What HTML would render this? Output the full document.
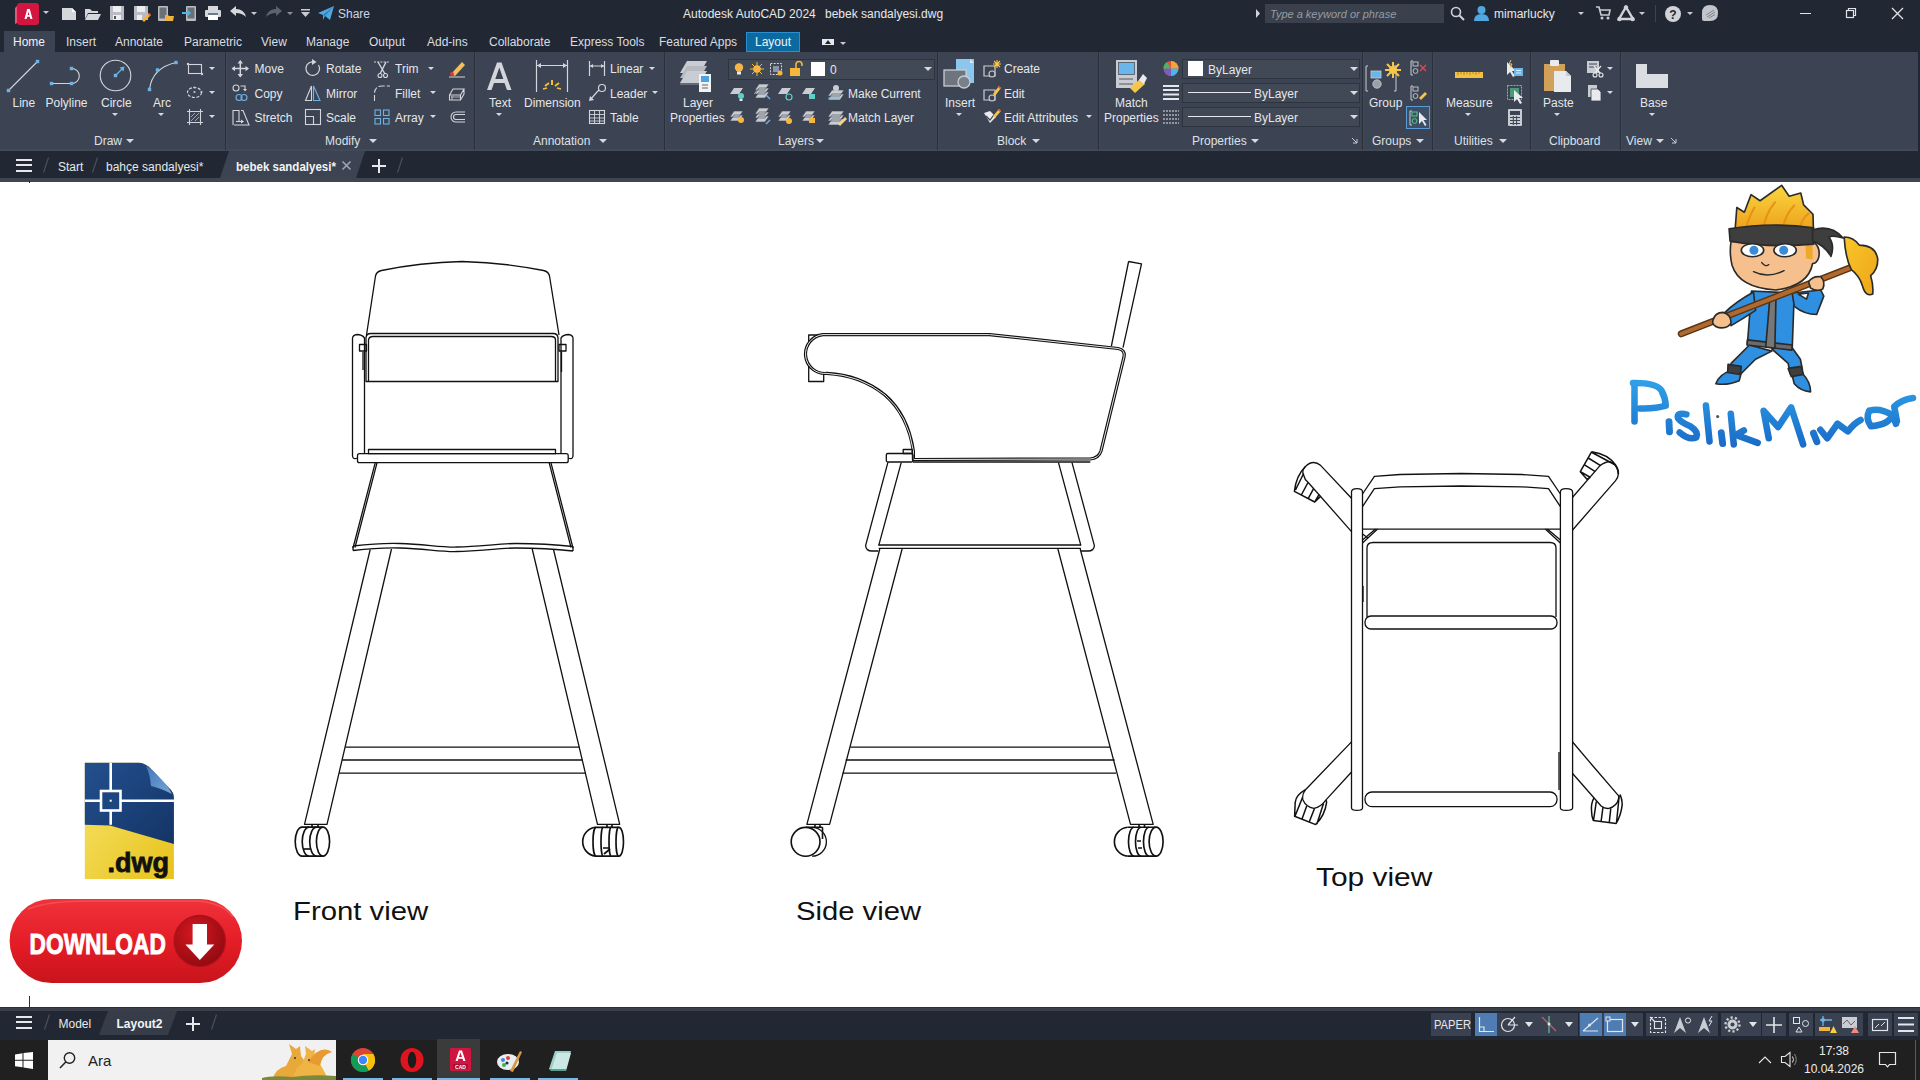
<!DOCTYPE html>
<html><head><meta charset="utf-8">
<style>
*{box-sizing:border-box}
html,body{margin:0;padding:0}
body{width:1920px;height:1080px;overflow:hidden;position:relative;background:#fff;font-family:"Liberation Sans",sans-serif;color:#e3e6ea}
.a{position:absolute}
.t{position:absolute;white-space:nowrap}
</style></head><body>
<div class="a" style="left:0px;top:0px;width:1920px;height:52px;background:#222833;"></div>
<div class="a" style="left:0px;top:52px;width:1918px;height:99px;background:#3c4352;"></div>
<div class="a" style="left:1918px;top:52px;width:2px;height:99px;background:#222833;"></div>
<div class="a" style="left:0px;top:149px;width:1918px;height:2px;background:#434a57;"></div>
<div class="a" style="left:0px;top:151px;width:1920px;height:27px;background:#222833;"></div>
<div class="a" style="left:0px;top:178px;width:1920px;height:4px;background:#40464f;"></div>
<svg class="a" style="left:14px;top:2px;" width="26" height="24" viewBox="0 0 26 24" fill="none"><path d="M3,4 Q3,1 6,1 L22,1 Q25,1 25,4 L25,20 Q25,23 22,23 L6,23 Q3,23 3,20 Z" fill="#d3163f"/><path d="M1,6 L3,4 L3,21 L1,22 Z" fill="#e8547a"/><path d="M10.5,17 L13.2,7 L15.8,7 L18.5,17 L16.4,17 L15.8,14.8 L13.2,14.8 L12.6,17 Z M13.7,13 L15.3,13 L14.5,9.8 Z" fill="#fff"/></svg>
<div class="a" style="left:42.5px;top:11.2px;width:0;height:0;border-left:3.5px solid transparent;border-right:3.5px solid transparent;border-top:3.5px solid #c8ccd2"></div>
<svg class="a" style="left:61px;top:5px;" width="17" height="17" viewBox="0 0 17 17" fill="none"><path d="M1,3 L11,3 L15,7 L15,15 L1,15 Z" fill="#d4d7dc"/><path d="M11,3 L11,7 L15,7" fill="#fff"/></svg>
<svg class="a" style="left:84px;top:5px;" width="18" height="17" viewBox="0 0 18 17" fill="none"><path d="M1,4 L6,4 L8,6 L14,6 L14,8 L4,8 L1,14 Z" fill="#d4d7dc"/><path d="M4,9 L17,9 L14,15 L1,15 Z" fill="#d4d7dc"/></svg>
<svg class="a" style="left:109px;top:4px;" width="16" height="18" viewBox="0 0 16 18" fill="none"><path d="M1,2 L15,2 L15,16 L1,16 Z" fill="#b9bdc3"/><rect x="4" y="2" width="8" height="6" fill="#eceef0"/><rect x="4" y="11" width="8" height="5" fill="#eceef0"/><rect x="5" y="12" width="2" height="3" fill="#555"/></svg>
<svg class="a" style="left:133px;top:4px;" width="18" height="18" viewBox="0 0 18 18" fill="none"><path d="M1,2 L15,2 L15,16 L1,16 Z" fill="#b9bdc3"/><rect x="4" y="2" width="8" height="6" fill="#eceef0"/><rect x="4" y="11" width="5" height="5" fill="#eceef0"/><path d="M9,16 L16,9 L18,11 L11,18 Z" fill="#f2b33d"/><path d="M15,10 L16,9 L18,11 L17,12Z" fill="#e0484f"/></svg>
<svg class="a" style="left:157px;top:4px;" width="18" height="18" viewBox="0 0 18 18" fill="none"><rect x="1" y="2" width="10" height="15" rx="1" fill="#b9bdc3"/><rect x="2.5" y="3.5" width="7" height="11" fill="#6b6f76"/><path d="M8,11 L11,11 L12,12 L17,12 L16,17 L8,17 Z" fill="#f2b33d"/></svg>
<svg class="a" style="left:182px;top:4px;" width="16" height="18" viewBox="0 0 16 18" fill="none"><rect x="4" y="2" width="10" height="15" rx="1" fill="#b9bdc3"/><rect x="5.5" y="3.5" width="7" height="11" fill="#6b6f76"/><path d="M0,8 L6,8 L6,6 L9,9 L6,12 L6,10 L0,10 Z" fill="#4fb4e8"/></svg>
<svg class="a" style="left:204px;top:4px;" width="18" height="18" viewBox="0 0 18 18" fill="none"><rect x="4" y="2" width="10" height="4" fill="#d4d7dc"/><rect x="1" y="6" width="16" height="7" rx="1" fill="#d4d7dc"/><rect x="4" y="11" width="10" height="5" fill="#fff"/><rect x="4" y="9" width="10" height="2" fill="#6a7a8a"/></svg>
<svg class="a" style="left:229px;top:5px;" width="18" height="14" viewBox="0 0 18 14" fill="none"><path d="M1,6 L7,1 L7,4 Q15,4 17,12 Q13,8 7,8 L7,11 Z" fill="#d4d7dc"/></svg>
<div class="a" style="left:251px;top:11.5px;width:0;height:0;border-left:3px solid transparent;border-right:3px solid transparent;border-top:3px solid #c8ccd2"></div>
<svg class="a" style="left:265px;top:5px;" width="18" height="14" viewBox="0 0 18 14" fill="none"><path d="M17,6 L11,1 L11,4 Q3,4 1,12 Q5,8 11,8 L11,11 Z" fill="#5d636c"/></svg>
<div class="a" style="left:287px;top:11.5px;width:0;height:0;border-left:3px solid transparent;border-right:3px solid transparent;border-top:3px solid #8b9098"></div>
<svg class="a" style="left:300px;top:8px;" width="11" height="11" viewBox="0 0 11 11" fill="none"><rect x="1" y="1" width="9" height="1.5" fill="#c8ccd2"/><path d="M1,4 L10,4 L5.5,9 Z" fill="#c8ccd2"/></svg>
<svg class="a" style="left:317px;top:5px;" width="18" height="17" viewBox="0 0 18 17" fill="none"><path d="M1,8 L17,1 L13,15 L8,11 L6,15 L6,10 Z" fill="#4fa9e0"/><path d="M6,10 L17,1 L8,11 Z" fill="#2f7fb8"/></svg>
<div class="t" style="left:338px;top:6.8px;font-size:12px;line-height:14px;color:#c9d6e6;">Share</div>
<div class="t" style="left:683px;top:6.8px;font-size:12px;line-height:14px;color:#e6e8eb;">Autodesk AutoCAD 2024</div>
<div class="t" style="left:825px;top:6.8px;font-size:12px;line-height:14px;color:#e6e8eb;">bebek sandalyesi.dwg</div>
<svg class="a" style="left:1255px;top:9px;" width="6" height="9" viewBox="0 0 6 9" fill="none"><path d="M1,0 L5,4.5 L1,9 Z" fill="#d0d3d8"/></svg>
<div class="a" style="left:1265px;top:4px;width:179px;height:19px;background:#3b414c;"></div>
<div class="t" style="left:1270px;top:7.7px;font-size:11px;line-height:13px;color:#959ca7;font-style:italic;">Type a keyword or phrase</div>
<svg class="a" style="left:1450px;top:6px;" width="15" height="15" viewBox="0 0 15 15" fill="none"><circle cx="6" cy="6" r="4.5" stroke="#d0d3d8" stroke-width="1.6"/><path d="M9.5,9.5 L14,14" stroke="#d0d3d8" stroke-width="2"/></svg>
<svg class="a" style="left:1473px;top:5px;" width="17" height="17" viewBox="0 0 17 17" fill="none"><circle cx="8.5" cy="5" r="4" fill="#4fa9e0"/><path d="M1,16 Q1,9 8.5,9 Q16,9 16,16 Z" fill="#4fa9e0"/></svg>
<div class="t" style="left:1494px;top:6.8px;font-size:12px;line-height:14px;color:#e6e8eb;">mimarlucky</div>
<div class="a" style="left:1578px;top:11.5px;width:0;height:0;border-left:3px solid transparent;border-right:3px solid transparent;border-top:3px solid #c8ccd2"></div>
<svg class="a" style="left:1595px;top:5px;" width="17" height="16" viewBox="0 0 17 16" fill="none"><path d="M1,2 L4,2 L6,10 L14,10 L15,5 L5,5" stroke="#c8ccd2" stroke-width="1.6"/><circle cx="7" cy="13" r="1.5" fill="#c8ccd2"/><circle cx="13" cy="13" r="1.5" fill="#c8ccd2"/></svg>
<svg class="a" style="left:1617px;top:5px;" width="18" height="17" viewBox="0 0 18 17" fill="none"><path d="M9,2 L16,14 L2,14 Z" stroke="#d0d3d8" stroke-width="2.4" fill="none"/><circle cx="9" cy="2.5" r="2.2" fill="#d0d3d8"/><circle cx="2.5" cy="14" r="2.2" fill="#d0d3d8"/><circle cx="15.5" cy="14" r="2.2" fill="#d0d3d8"/></svg>
<div class="a" style="left:1639px;top:11.5px;width:0;height:0;border-left:3px solid transparent;border-right:3px solid transparent;border-top:3px solid #c8ccd2"></div>
<div class="a" style="left:1655px;top:5px;width:1px;height:17px;background:#3e444e;"></div>
<svg class="a" style="left:1664px;top:5px;" width="18" height="18" viewBox="0 0 18 18" fill="none"><circle cx="9" cy="9" r="8" fill="#d0d3d8"/><text x="9" y="13.5" font-size="12" font-family="Liberation Sans" font-weight="bold" text-anchor="middle" fill="#20252e">?</text></svg>
<div class="a" style="left:1687px;top:11.5px;width:0;height:0;border-left:3px solid transparent;border-right:3px solid transparent;border-top:3px solid #c8ccd2"></div>
<svg class="a" style="left:1701px;top:4px;" width="18" height="19" viewBox="0 0 18 19" fill="none"><path d="M9,1 Q17,1 17,9 Q17,17 9,17 L3,17 Q1,17 1,15 L1,9 Q1,1 9,1 Z" fill="#c2c6cc"/><path d="M5,11 L13,6 M6,13 L14,8 M8,14 L14,10.5" stroke="#7d838b" stroke-width="1"/></svg>
<div class="a" style="left:1800px;top:13px;width:11px;height:1px;background:#e0e3e7;"></div>
<svg class="a" style="left:1845px;top:7px;" width="12" height="12" viewBox="0 0 12 12" fill="none"><rect x="1.5" y="3.5" width="7" height="7" stroke="#e0e3e7" stroke-width="1.2"/><path d="M3.5,3.5 L3.5,1.5 L10.5,1.5 L10.5,8.5 L8.5,8.5" stroke="#e0e3e7" stroke-width="1.2"/></svg>
<svg class="a" style="left:1891px;top:7px;" width="13" height="13" viewBox="0 0 13 13" fill="none"><path d="M1,1 L12,12 M12,1 L1,12" stroke="#e0e3e7" stroke-width="1.3"/></svg>
<div class="a" style="left:4px;top:31px;width:51px;height:21px;background:#3c4352;"></div>
<div class="t" style="left:13px;top:34.8px;font-size:12px;line-height:14px;color:#f0f2f4;">Home</div>
<div class="t" style="left:66px;top:34.8px;font-size:12px;line-height:14px;color:#d9dde2;">Insert</div>
<div class="t" style="left:115px;top:34.8px;font-size:12px;line-height:14px;color:#d9dde2;">Annotate</div>
<div class="t" style="left:184px;top:34.8px;font-size:12px;line-height:14px;color:#d9dde2;">Parametric</div>
<div class="t" style="left:261px;top:34.8px;font-size:12px;line-height:14px;color:#d9dde2;">View</div>
<div class="t" style="left:306px;top:34.8px;font-size:12px;line-height:14px;color:#d9dde2;">Manage</div>
<div class="t" style="left:369px;top:34.8px;font-size:12px;line-height:14px;color:#d9dde2;">Output</div>
<div class="t" style="left:427px;top:34.8px;font-size:12px;line-height:14px;color:#d9dde2;">Add-ins</div>
<div class="t" style="left:489px;top:34.8px;font-size:12px;line-height:14px;color:#d9dde2;">Collaborate</div>
<div class="t" style="left:570px;top:34.8px;font-size:12px;line-height:14px;color:#d9dde2;">Express Tools</div>
<div class="t" style="left:659px;top:34.8px;font-size:12px;line-height:14px;color:#d9dde2;">Featured Apps</div>
<div class="a" style="left:746px;top:32px;width:54px;height:20px;background:#0d6aa0;border:1px solid #2b8fcf"></div>
<div class="t" style="left:755px;top:34.8px;font-size:12px;line-height:14px;color:#f0f2f4;">Layout</div>
<div class="a" style="left:822px;top:39px;width:12px;height:6px;background:#e8eaee;"></div>
<svg class="a" style="left:825px;top:40px;" width="6" height="4" viewBox="0 0 6 4" fill="none"><path d="M0,4 L3,0 L6,4 Z" fill="#20252e"/></svg>
<div class="a" style="left:840px;top:41.5px;width:0;height:0;border-left:3px solid transparent;border-right:3px solid transparent;border-top:3px solid #c8ccd2"></div>
<div class="a" style="left:225px;top:52px;width:1px;height:98px;background:#2a3039;"></div>
<div class="a" style="left:226px;top:52px;width:1px;height:98px;background:#414957;"></div>
<div class="a" style="left:474px;top:52px;width:1px;height:98px;background:#2a3039;"></div>
<div class="a" style="left:475px;top:52px;width:1px;height:98px;background:#414957;"></div>
<div class="a" style="left:664px;top:52px;width:1px;height:98px;background:#2a3039;"></div>
<div class="a" style="left:665px;top:52px;width:1px;height:98px;background:#414957;"></div>
<div class="a" style="left:937px;top:52px;width:1px;height:98px;background:#2a3039;"></div>
<div class="a" style="left:938px;top:52px;width:1px;height:98px;background:#414957;"></div>
<div class="a" style="left:1098px;top:52px;width:1px;height:98px;background:#2a3039;"></div>
<div class="a" style="left:1099px;top:52px;width:1px;height:98px;background:#414957;"></div>
<div class="a" style="left:1362px;top:52px;width:1px;height:98px;background:#2a3039;"></div>
<div class="a" style="left:1363px;top:52px;width:1px;height:98px;background:#414957;"></div>
<div class="a" style="left:1432px;top:52px;width:1px;height:98px;background:#2a3039;"></div>
<div class="a" style="left:1433px;top:52px;width:1px;height:98px;background:#414957;"></div>
<div class="a" style="left:1530px;top:52px;width:1px;height:98px;background:#2a3039;"></div>
<div class="a" style="left:1531px;top:52px;width:1px;height:98px;background:#414957;"></div>
<div class="a" style="left:1620px;top:52px;width:1px;height:98px;background:#2a3039;"></div>
<div class="a" style="left:1621px;top:52px;width:1px;height:98px;background:#414957;"></div>
<div class="t" style="left:12.5px;top:95.8px;font-size:12px;line-height:14px;color:#e4e7eb;">Line</div>
<div class="t" style="left:45.5px;top:95.8px;font-size:12px;line-height:14px;color:#e4e7eb;">Polyline</div>
<div class="t" style="left:101px;top:95.8px;font-size:12px;line-height:14px;color:#e4e7eb;">Circle</div>
<div class="t" style="left:153px;top:95.8px;font-size:12px;line-height:14px;color:#e4e7eb;">Arc</div>
<div class="a" style="left:112.0px;top:112.8px;width:0;height:0;border-left:3.5px solid transparent;border-right:3.5px solid transparent;border-top:3.5px solid #d6dae0"></div>
<div class="a" style="left:158.0px;top:112.8px;width:0;height:0;border-left:3.5px solid transparent;border-right:3.5px solid transparent;border-top:3.5px solid #d6dae0"></div>
<div class="a" style="left:209.0px;top:67.2px;width:0;height:0;border-left:3.5px solid transparent;border-right:3.5px solid transparent;border-top:3.5px solid #d6dae0"></div>
<div class="a" style="left:209.0px;top:91.2px;width:0;height:0;border-left:3.5px solid transparent;border-right:3.5px solid transparent;border-top:3.5px solid #d6dae0"></div>
<div class="a" style="left:209.0px;top:115.2px;width:0;height:0;border-left:3.5px solid transparent;border-right:3.5px solid transparent;border-top:3.5px solid #d6dae0"></div>
<div class="t" style="left:94px;top:133.8px;font-size:12px;line-height:14px;color:#dde1e6;">Draw</div>
<div class="a" style="left:126px;top:139.0px;width:0;height:0;border-left:4px solid transparent;border-right:4px solid transparent;border-top:4px solid #d6dae0"></div>
<div class="t" style="left:254.5px;top:61.8px;font-size:12px;line-height:14px;color:#e4e7eb;">Move</div>
<div class="t" style="left:326px;top:61.8px;font-size:12px;line-height:14px;color:#e4e7eb;">Rotate</div>
<div class="t" style="left:395px;top:61.8px;font-size:12px;line-height:14px;color:#e4e7eb;">Trim</div>
<div class="t" style="left:254.5px;top:86.8px;font-size:12px;line-height:14px;color:#e4e7eb;">Copy</div>
<div class="t" style="left:326px;top:86.8px;font-size:12px;line-height:14px;color:#e4e7eb;">Mirror</div>
<div class="t" style="left:395px;top:86.8px;font-size:12px;line-height:14px;color:#e4e7eb;">Fillet</div>
<div class="t" style="left:254.5px;top:110.8px;font-size:12px;line-height:14px;color:#e4e7eb;">Stretch</div>
<div class="t" style="left:326px;top:110.8px;font-size:12px;line-height:14px;color:#e4e7eb;">Scale</div>
<div class="t" style="left:395px;top:110.8px;font-size:12px;line-height:14px;color:#e4e7eb;">Array</div>
<div class="a" style="left:427.5px;top:67.2px;width:0;height:0;border-left:3.5px solid transparent;border-right:3.5px solid transparent;border-top:3.5px solid #d6dae0"></div>
<div class="a" style="left:429.5px;top:91.2px;width:0;height:0;border-left:3.5px solid transparent;border-right:3.5px solid transparent;border-top:3.5px solid #d6dae0"></div>
<div class="a" style="left:429.5px;top:115.2px;width:0;height:0;border-left:3.5px solid transparent;border-right:3.5px solid transparent;border-top:3.5px solid #d6dae0"></div>
<div class="t" style="left:325px;top:133.8px;font-size:12px;line-height:14px;color:#dde1e6;">Modify</div>
<div class="a" style="left:369px;top:139.0px;width:0;height:0;border-left:4px solid transparent;border-right:4px solid transparent;border-top:4px solid #d6dae0"></div>
<div class="t" style="left:489px;top:95.8px;font-size:12px;line-height:14px;color:#e4e7eb;">Text</div>
<div class="a" style="left:495.5px;top:112.8px;width:0;height:0;border-left:3.5px solid transparent;border-right:3.5px solid transparent;border-top:3.5px solid #d6dae0"></div>
<div class="t" style="left:524px;top:95.8px;font-size:12px;line-height:14px;color:#e4e7eb;">Dimension</div>
<div class="t" style="left:610px;top:61.8px;font-size:12px;line-height:14px;color:#e4e7eb;">Linear</div>
<div class="a" style="left:648.5px;top:67.2px;width:0;height:0;border-left:3.5px solid transparent;border-right:3.5px solid transparent;border-top:3.5px solid #d6dae0"></div>
<div class="t" style="left:610px;top:86.8px;font-size:12px;line-height:14px;color:#e4e7eb;">Leader</div>
<div class="a" style="left:651.5px;top:91.2px;width:0;height:0;border-left:3.5px solid transparent;border-right:3.5px solid transparent;border-top:3.5px solid #d6dae0"></div>
<div class="t" style="left:610px;top:110.8px;font-size:12px;line-height:14px;color:#e4e7eb;">Table</div>
<div class="t" style="left:533px;top:133.8px;font-size:12px;line-height:14px;color:#dde1e6;">Annotation</div>
<div class="a" style="left:599px;top:139.0px;width:0;height:0;border-left:4px solid transparent;border-right:4px solid transparent;border-top:4px solid #d6dae0"></div>
<div class="t" style="left:683px;top:95.8px;font-size:12px;line-height:14px;color:#e4e7eb;">Layer</div>
<div class="t" style="left:670px;top:110.8px;font-size:12px;line-height:14px;color:#e4e7eb;">Properties</div>
<div class="a" style="left:728px;top:59px;width:207px;height:21px;background:#414856;border:1px solid #2e343d"></div>
<div class="t" style="left:830px;top:62.8px;font-size:12px;line-height:14px;color:#e4e7eb;">0</div>
<div class="a" style="left:924px;top:67.0px;width:0;height:0;border-left:4px solid transparent;border-right:4px solid transparent;border-top:4px solid #d6dae0"></div>
<div class="t" style="left:848px;top:86.8px;font-size:12px;line-height:14px;color:#e4e7eb;">Make Current</div>
<div class="t" style="left:848px;top:110.8px;font-size:12px;line-height:14px;color:#e4e7eb;">Match Layer</div>
<div class="t" style="left:778px;top:133.8px;font-size:12px;line-height:14px;color:#dde1e6;">Layers</div>
<div class="a" style="left:816px;top:139.0px;width:0;height:0;border-left:4px solid transparent;border-right:4px solid transparent;border-top:4px solid #d6dae0"></div>
<div class="t" style="left:945px;top:95.8px;font-size:12px;line-height:14px;color:#e4e7eb;">Insert</div>
<div class="a" style="left:955.5px;top:112.8px;width:0;height:0;border-left:3.5px solid transparent;border-right:3.5px solid transparent;border-top:3.5px solid #d6dae0"></div>
<div class="t" style="left:1004px;top:61.8px;font-size:12px;line-height:14px;color:#e4e7eb;">Create</div>
<div class="t" style="left:1004px;top:86.8px;font-size:12px;line-height:14px;color:#e4e7eb;">Edit</div>
<div class="t" style="left:1004px;top:110.8px;font-size:12px;line-height:14px;color:#e4e7eb;">Edit Attributes</div>
<div class="a" style="left:1085.5px;top:115.2px;width:0;height:0;border-left:3.5px solid transparent;border-right:3.5px solid transparent;border-top:3.5px solid #d6dae0"></div>
<div class="t" style="left:997px;top:133.8px;font-size:12px;line-height:14px;color:#dde1e6;">Block</div>
<div class="a" style="left:1032px;top:139.0px;width:0;height:0;border-left:4px solid transparent;border-right:4px solid transparent;border-top:4px solid #d6dae0"></div>
<div class="t" style="left:1115px;top:95.8px;font-size:12px;line-height:14px;color:#e4e7eb;">Match</div>
<div class="t" style="left:1104px;top:110.8px;font-size:12px;line-height:14px;color:#e4e7eb;">Properties</div>
<div class="a" style="left:1182px;top:59px;width:178px;height:20px;background:#414856;border:1px solid #2e343d"></div>
<div class="a" style="left:1350px;top:67.0px;width:0;height:0;border-left:4px solid transparent;border-right:4px solid transparent;border-top:4px solid #d6dae0"></div>
<div class="a" style="left:1182px;top:83px;width:178px;height:20px;background:#414856;border:1px solid #2e343d"></div>
<div class="a" style="left:1350px;top:91.0px;width:0;height:0;border-left:4px solid transparent;border-right:4px solid transparent;border-top:4px solid #d6dae0"></div>
<div class="a" style="left:1182px;top:107px;width:178px;height:20px;background:#414856;border:1px solid #2e343d"></div>
<div class="a" style="left:1350px;top:115.0px;width:0;height:0;border-left:4px solid transparent;border-right:4px solid transparent;border-top:4px solid #d6dae0"></div>
<div class="a" style="left:1188px;top:61px;width:15px;height:15px;background:#ffffff;"></div>
<div class="t" style="left:1208px;top:62.8px;font-size:12px;line-height:14px;color:#e4e7eb;">ByLayer</div>
<div class="a" style="left:1188px;top:92px;width:63px;height:1px;background:#e4e7eb;"></div>
<div class="t" style="left:1254px;top:86.8px;font-size:12px;line-height:14px;color:#e4e7eb;">ByLayer</div>
<div class="a" style="left:1188px;top:116px;width:63px;height:1px;background:#e4e7eb;"></div>
<div class="t" style="left:1254px;top:110.8px;font-size:12px;line-height:14px;color:#e4e7eb;">ByLayer</div>
<div class="t" style="left:1192px;top:133.8px;font-size:12px;line-height:14px;color:#dde1e6;">Properties</div>
<div class="a" style="left:1251px;top:139.0px;width:0;height:0;border-left:4px solid transparent;border-right:4px solid transparent;border-top:4px solid #d6dae0"></div>
<div class="t" style="left:1369px;top:95.8px;font-size:12px;line-height:14px;color:#e4e7eb;">Group</div>
<div class="a" style="left:1406px;top:106px;width:24px;height:23px;background:#3d4f66;border:1px solid #5a9ad6"></div>
<div class="t" style="left:1372px;top:133.8px;font-size:12px;line-height:14px;color:#dde1e6;">Groups</div>
<div class="a" style="left:1416px;top:139.0px;width:0;height:0;border-left:4px solid transparent;border-right:4px solid transparent;border-top:4px solid #d6dae0"></div>
<div class="t" style="left:1446px;top:95.8px;font-size:12px;line-height:14px;color:#e4e7eb;">Measure</div>
<div class="a" style="left:1464.5px;top:112.8px;width:0;height:0;border-left:3.5px solid transparent;border-right:3.5px solid transparent;border-top:3.5px solid #d6dae0"></div>
<div class="t" style="left:1454px;top:133.8px;font-size:12px;line-height:14px;color:#dde1e6;">Utilities</div>
<div class="a" style="left:1499px;top:139.0px;width:0;height:0;border-left:4px solid transparent;border-right:4px solid transparent;border-top:4px solid #d6dae0"></div>
<div class="t" style="left:1543px;top:95.8px;font-size:12px;line-height:14px;color:#e4e7eb;">Paste</div>
<div class="a" style="left:1553.5px;top:112.8px;width:0;height:0;border-left:3.5px solid transparent;border-right:3.5px solid transparent;border-top:3.5px solid #d6dae0"></div>
<div class="a" style="left:1606.5px;top:67.2px;width:0;height:0;border-left:3.5px solid transparent;border-right:3.5px solid transparent;border-top:3.5px solid #d6dae0"></div>
<div class="a" style="left:1606.5px;top:91.2px;width:0;height:0;border-left:3.5px solid transparent;border-right:3.5px solid transparent;border-top:3.5px solid #d6dae0"></div>
<div class="t" style="left:1549px;top:133.8px;font-size:12px;line-height:14px;color:#dde1e6;">Clipboard</div>
<div class="t" style="left:1640px;top:95.8px;font-size:12px;line-height:14px;color:#e4e7eb;">Base</div>
<div class="a" style="left:1648.5px;top:112.8px;width:0;height:0;border-left:3.5px solid transparent;border-right:3.5px solid transparent;border-top:3.5px solid #d6dae0"></div>
<div class="t" style="left:1626px;top:133.8px;font-size:12px;line-height:14px;color:#dde1e6;">View</div>
<div class="a" style="left:1656px;top:139.0px;width:0;height:0;border-left:4px solid transparent;border-right:4px solid transparent;border-top:4px solid #d6dae0"></div>
<svg class="a" style="left:0;top:0" width="1920" height="180" viewBox="0 0 1920 180" fill="none"><path d="M9,90 L37,62" stroke="#d2d6dc" stroke-width="1.1"/><rect x="6.8" y="88.8" width="3.4" height="3.4" fill="#6db3e6"/><rect x="35.8" y="59.8" width="3.4" height="3.4" fill="#6db3e6"/><path d="M51.5,83.5 L71.5,83.5 M71.5,68.5 A7.8,7.5 0 0 1 71.5,83.5" stroke="#d2d6dc" stroke-width="1.1"/><rect x="49.8" y="81.8" width="3.4" height="3.4" fill="#6db3e6"/><rect x="69.8" y="81.8" width="3.4" height="3.4" fill="#6db3e6"/><rect x="69.8" y="66.8" width="3.4" height="3.4" fill="#6db3e6"/><circle cx="115.5" cy="75.5" r="15.3" stroke="#d2d6dc" stroke-width="1.1"/><path d="M116,75 L123,68" stroke="#6db3e6" stroke-width="1.3"/><path d="M124.5,66.5 L119.5,67.5 L123.5,71.5 Z" fill="#6db3e6"/><rect x="113.8" y="73.8" width="3.4" height="3.4" fill="#6db3e6"/><path d="M149.5,89.5 Q152,68 176,62.5" stroke="#d2d6dc" stroke-width="1.1"/><rect x="147.8" y="87.8" width="3.4" height="3.4" fill="#6db3e6"/><rect x="155.8" y="68.3" width="3.4" height="3.4" fill="#6db3e6"/><rect x="174.3" y="60.8" width="3.4" height="3.4" fill="#6db3e6"/><rect x="188.5" y="64.5" width="13" height="9" stroke="#d2d6dc" stroke-width="1.1"/><rect x="186.9" y="62.9" width="2.2" height="2.2" fill="#c8cdd3"/><rect x="200.9" y="72.9" width="2.2" height="2.2" fill="#c8cdd3"/><ellipse cx="194.5" cy="92.5" rx="7" ry="5" stroke="#d2d6dc" stroke-width="1.1" stroke-dasharray="3,1.5"/><rect x="193.6" y="91.1" width="1.8" height="1.8" fill="#c8cdd3"/><rect x="200.6" y="91.1" width="1.8" height="1.8" fill="#c8cdd3"/><rect x="193.6" y="86.6" width="1.8" height="1.8" fill="#c8cdd3"/><path d="M187,111.5 L203,111.5 M187,122.5 L203,122.5 M189.5,109 L189.5,125 M200.5,109 L200.5,125" stroke="#d2d6dc" stroke-width="1.1"/><path d="M191,121 L199,113 M191,117 L195,113 M195,121 L199,117" stroke="#9fb3c4" stroke-width="0.9"/><path d="M240.3,61 L240.3,76.5 M232.5,68.6 L248,68.6" stroke="#d2d6dc" stroke-width="1.5"/><path d="M240.3,60 L237.5,63.5 L243,63.5Z M240.3,77.5 L237.5,74 L243,74Z M231.5,68.6 L235,66 L235,71.2Z M249,68.6 L245.5,66 L245.5,71.2Z" fill="#d2d6dc"/><circle cx="236" cy="88" r="3" stroke="#d2d6dc" stroke-width="1.1"/><path d="M240.5,86 L245,86 L245,90" stroke="#d2d6dc" stroke-width="1.1"/><path d="M243,89 L247,89 L245,91.5Z" fill="#d2d6dc"/><circle cx="239" cy="97.5" r="3" stroke="#6db3e6" stroke-width="1.1"/><circle cx="244" cy="97.5" r="3" stroke="#6db3e6" stroke-width="1.1"/><path d="M233,125 L233,110.5 L239,110.5 L239,121 M234,125 L249,125 L243,110.5 L241,110.5" stroke="#d2d6dc" stroke-width="1.1"/><path d="M236,121.5 L243,121.5" stroke="#d2d6dc" stroke-width="1.1"/><path d="M244,121.5 L241,119.5 L241,123.5Z" fill="#d2d6dc"/><path d="M318.5,65 A6.8,6.8 0 1 1 312,61.8" stroke="#d2d6dc" stroke-width="1.2"/><path d="M312,59 L316.5,62 L312,65 Z" fill="#d2d6dc"/><path d="M311.5,61 L311.5,75.5 L305.5,75.5 Z" stroke="#d2d6dc" stroke-width="1.1" transform="translate(0,25)"/><path d="M313.5,86 L313.5,100.5 L320,100.5 Z" stroke="#6db3e6" stroke-width="1.1"/><rect x="305.5" y="109.5" width="15" height="15" stroke="#d2d6dc" stroke-width="1.1"/><path d="M305.5,116.5 L313.5,116.5 L313.5,124.5" stroke="#d2d6dc" stroke-width="1.1"/><path d="M374,62 L390,62" stroke="#d2d6dc" stroke-width="1" stroke-dasharray="2,1.2"/><path d="M378,62 L385,74 M386,62 L380,74" stroke="#d2d6dc" stroke-width="1.4"/><circle cx="380" cy="75.5" r="2" stroke="#d2d6dc" stroke-width="1.1"/><circle cx="385.5" cy="75.5" r="2" stroke="#d2d6dc" stroke-width="1.1"/><path d="M374.5,101 L374.5,94 Q374.5,86 382,86 L390,86" stroke="#d2d6dc" stroke-width="1.1" stroke-dasharray="6,2"/><rect x="375" y="110" width="5.5" height="5.5" stroke="#6db3e6" stroke-width="1.1"/><rect x="383.5" y="110" width="5.5" height="5.5" stroke="#6db3e6" stroke-width="1.1"/><rect x="375" y="118.5" width="5.5" height="5.5" stroke="#6db3e6" stroke-width="1.1"/><rect x="383.5" y="118.5" width="5.5" height="5.5" stroke="#6db3e6" stroke-width="1.1"/><path d="M451,74 L462,62 L465,65 L455,76 Z" fill="#f0c060"/><circle cx="452" cy="74" r="2" fill="#e0383f"/><path d="M449,77 L465,77" stroke="#d2d6dc" stroke-width="1"/><path d="M449.5,95 L449.5,100 L460.5,100 L460.5,95 Z M449.5,95 L453,89 L464,89 L460.5,95 M460.5,100 L464,94 L464,89" stroke="#d2d6dc" stroke-width="1.1"/><path d="M452,96 L452,100 M451,97 L460,97" stroke="#d2d6dc" stroke-width="0.8"/><path d="M465,112 L456,112 A5,5 0 0 0 456,122 L465,122 M465,114.5 L456,114.5 A2.5,2.5 0 0 0 456,119.5 L465,119.5" stroke="#d2d6dc" stroke-width="1.1"/><path d="M487,90 L497,62.5 L501.5,62.5 L511.5,90 L507,90 L504.5,83 L494,83 L491.5,90 Z M495.3,79 L503.3,79 L499.3,67.5 Z" fill="#d2d6dc"/><path d="M536.5,60 L536.5,92 M567.5,60 L567.5,92 M537,65.5 L567,65.5" stroke="#d2d6dc" stroke-width="1.2"/><path d="M537,65.5 L541,63 L541,68Z M567,65.5 L563,63 L563,68Z" fill="#d2d6dc"/><path d="M545,86 L549,83 M552,80 L552,85 M559,83 L555,86" stroke="#f0c030" stroke-width="2"/><path d="M543,89 L547,88 M561,89 L557,88" stroke="#f0c030" stroke-width="1.6"/><path d="M589.5,61 L589.5,76 M604.5,61 L604.5,76 M590,66 L604,66" stroke="#d2d6dc" stroke-width="1.2"/><path d="M590,66 L593,64 L593,68Z M604,66 L601,64 L601,68Z" fill="#d2d6dc"/><path d="M590,100 L597,92" stroke="#d2d6dc" stroke-width="1.2"/><path d="M589,101 L590,96 L594,100Z" fill="#d2d6dc"/><circle cx="602" cy="88" r="3.5" stroke="#d2d6dc" stroke-width="1.2"/><path d="M597,92 L599,90" stroke="#d2d6dc" stroke-width="1.2"/><rect x="589.5" y="110.5" width="15" height="13" stroke="#d2d6dc" stroke-width="1.1"/><path d="M589.5,114.5 L604.5,114.5 M589.5,118 L604.5,118 M589.5,121 L604.5,121 M594.5,110.5 L594.5,123.5 M599.5,110.5 L599.5,123.5" stroke="#d2d6dc" stroke-width="0.9"/><path d="M680,73 L687,61 L707,61 L700,73 Z" fill="#c9cdd3"/><path d="M680,78 L687,66 L707,66 L700,78 Z" fill="#b5bac1"/><path d="M680,83 L687,71 L707,71 L700,83 Z" fill="#c9cdd3"/><path d="M680,84 L700,84" stroke="#8d939b"/><rect x="699" y="74" width="12" height="18" fill="#f0f2f4"/><rect x="701" y="76" width="8" height="6" fill="#4ca3e0"/><path d="M702,85 L708,85 M702,88 L708,88" stroke="#555" stroke-width="0.9"/><circle cx="739" cy="67.5" r="4.2" fill="#f4b64a"/><rect x="737" y="71.5" width="4" height="3" fill="#e6e8eb"/><circle cx="757" cy="69" r="3.8" fill="#f6b73c"/><path d="M757,62 L757,76 M750,69 L764,69 M752,64 L762,74 M762,64 L752,74" stroke="#f6b73c" stroke-width="1"/><rect x="770.5" y="63.5" width="11" height="11" stroke="#d2d6dc" stroke-width="1" stroke-dasharray="2,1.2"/><rect x="773" y="66" width="6" height="6" fill="#8a95a5"/><circle cx="780" cy="73" r="2.5" fill="#f6b73c"/><rect x="790" y="68" width="10" height="8" fill="#f6b73c"/><path d="M796,68 L796,64.5 Q796,61.5 799,61.5 Q802,61.5 802,64.5 L802,66" stroke="#f6b73c" stroke-width="1.6"/><rect x="811" y="62" width="14" height="14" fill="#fff"/><path d="M730,94 L734,88 L743,88 L739,94 Z" fill="#c9cdd3"/><circle cx="741" cy="96" r="3" fill="#5fd0c8"/><rect x="739.5" y="99" width="3" height="2" fill="#e6e8eb"/><path d="M754,94 L758,88 L767,88 L763,94 Z" fill="#c9cdd3"/><path d="M778,94 L782,88 L791,88 L787,94 Z" fill="#c9cdd3"/><circle cx="789" cy="97" r="3" stroke="#5fd0c8" stroke-width="1.2"/><path d="M802,94 L806,88 L815,88 L811,94 Z" fill="#c9cdd3"/><rect x="809" y="94" width="6" height="5" fill="#5fd0c8"/><path d="M755,90 L759,84 L769,84 L765,90 Z M755,94 L759,88 L769,88 L765,94 Z M755,98 L759,92 L769,92 L765,98Z" fill="#c9cdd3" stroke="#3c4352" stroke-width="0.6"/><path d="M766,95 L770,99" stroke="#6db3e6" stroke-width="1.4"/><path d="M828,96 L832,90 L844,90 L840,96 Z M828,100 L832,94 L844,94 L840,100 Z" fill="#c9cdd3" stroke="#3c4352" stroke-width="0.6"/><circle cx="836" cy="88" r="3" fill="#c9cdd3"/><path d="M828,98 L840,98" stroke="#6db3e6"/><path d="M730,117 L734,111 L743,111 L739,117 Z M730,121 L734,115 L743,115 L739,121 Z" fill="#c9cdd3" stroke="#3c4352" stroke-width="0.6"/><circle cx="741" cy="120" r="3" fill="#f6b73c"/><path d="M778,117 L782,111 L791,111 L787,117 Z M778,121 L782,115 L791,115 L787,121 Z" fill="#c9cdd3" stroke="#3c4352" stroke-width="0.6"/><circle cx="789" cy="121" r="3" fill="#f6b73c"/><path d="M802,117 L806,111 L815,111 L811,117 Z M802,121 L806,115 L815,115 L811,121 Z" fill="#c9cdd3" stroke="#3c4352" stroke-width="0.6"/><rect x="809" y="118" width="6" height="5" fill="#f6b73c"/><path d="M755,114 L759,108 L769,108 L765,114 Z M755,118 L759,112 L769,112 L765,118 Z M755,122 L759,116 L769,116 L765,122Z" fill="#c9cdd3" stroke="#3c4352" stroke-width="0.6"/><path d="M766,124 L770,120" stroke="#6db3e6" stroke-width="1.4"/><path d="M828,117 L832,111 L844,111 L840,117 Z M828,121 L832,115 L844,115 L840,121 Z M828,125 L832,119 L844,119 L840,125 Z" fill="#c9cdd3" stroke="#3c4352" stroke-width="0.6"/><path d="M838,124 L845,117 L847,119 L840,126Z" fill="#f6d08a"/><rect x="956" y="59" width="18" height="24" fill="#8cc6ef"/><path d="M970,59 L974,63 L970,63Z" fill="#d8ecfa"/><rect x="944" y="70" width="22" height="16" fill="#6e757e" stroke="#c9cdd3" stroke-width="1.3"/><circle cx="964" cy="82" r="6" fill="#7a8089" stroke="#c9cdd3" stroke-width="1.3"/><path d="M984,66 L995,66 L995,76 L984,76 Z" stroke="#c9cdd3" stroke-width="1.2"/><circle cx="992" cy="74" r="3" fill="#3c4352" stroke="#c9cdd3" stroke-width="1.1"/><path d="M997,60 L997,68 M993,64 L1001,64 M994,61 L1000,67 M1000,61 L994,67" stroke="#f6c64a" stroke-width="1.1"/><path d="M984,90 L995,90 L995,100 L984,100 Z" stroke="#c9cdd3" stroke-width="1.2"/><circle cx="992" cy="98" r="3" fill="#3c4352" stroke="#c9cdd3" stroke-width="1.1"/><path d="M993,94 L999,86 L1001,88 L995,96Z" fill="#f6c64a"/><path d="M998,87 L999,86 L1001,88 L1000,89Z" fill="#e0484f"/><path d="M984,113 L990,111 L996,117 L990,123 Z" fill="#e8eaee"/><path d="M986,116 L990,120 L996,112" stroke="#3c4352" stroke-width="1.2"/><path d="M993,116 L999,109 L1001,111 L995,118Z" fill="#f6c64a"/><path d="M998,110 L999,109 L1001,111 L1000,112Z" fill="#e0484f"/><rect x="1116" y="60" width="21" height="28" fill="#c9cdd3"/><rect x="1118.5" y="62.5" width="16" height="12" fill="#6ab6ea" stroke="#4c5560" stroke-width="0.8"/><path d="M1119,79 L1133,79 M1119,84 L1133,84" stroke="#555" stroke-width="1"/><path d="M1130,88 L1140,79 L1145,84 L1135,93 Z" fill="#f6c64a"/><path d="M1139,80 L1143,74 L1147,78 L1144,84 Z" fill="#e8eaee"/><circle cx="1171" cy="68.5" r="7.5" fill="#e94f3e"/><path d="M1171,68.5 L1171,61 A7.5,7.5 0 0 1 1178.5,68.5 Z" fill="#f3a43b"/><path d="M1171,68.5 L1178.5,68.5 A7.5,7.5 0 0 1 1171,76 Z" fill="#4db6e8"/><path d="M1171,68.5 L1171,76 A7.5,7.5 0 0 1 1163.5,68.5 Z" fill="#7c5bc9"/><path d="M1171,68.5 L1163.5,68.5 A7.5,7.5 0 0 1 1167,62 Z" fill="#42b863"/><path d="M1163,86 L1179,86 M1163,90 L1179,90 M1163,94.5 L1179,94.5 M1163,99 L1179,99" stroke="#e4e7eb" stroke-width="2"/><path d="M1163,111 L1179,111 M1163,115 L1179,115 M1163,119 L1179,119 M1163,123 L1179,123" stroke="#e4e7eb" stroke-width="1.2" stroke-dasharray="2,1"/><path d="M1368,66 L1366,66 L1366,91 L1368,91 M1394,66 L1396,66 L1396,91 L1394,91" stroke="#c9cdd3" stroke-width="1"/><rect x="1371" y="71" width="10" height="7" fill="#6ab6ea" stroke="#c9cdd3" stroke-width="0.8"/><circle cx="1377" cy="84" r="4.2" fill="#9aa0a8" stroke="#c9cdd3" stroke-width="0.8"/><path d="M1393,62 L1393,78 M1385,70 L1401,70 M1387,64 L1399,76 M1399,64 L1387,76" stroke="#f6c64a" stroke-width="2"/><circle cx="1393" cy="70" r="4" fill="#f6c64a"/><path d="M1413,61 L1411,61 L1411,75 L1413,75" stroke="#c9cdd3"/><rect x="1413" y="62" width="5" height="4" stroke="#c9cdd3" stroke-width="0.9"/><circle cx="1415.5" cy="71" r="2.4" stroke="#c9cdd3" stroke-width="0.9"/><path d="M1420,65 L1426,71 M1426,65 L1420,71" stroke="#e0484f" stroke-width="1.4"/><path d="M1413,86 L1411,86 L1411,100 L1413,100" stroke="#c9cdd3"/><rect x="1413" y="87" width="5" height="4" stroke="#c9cdd3" stroke-width="0.9"/><circle cx="1415.5" cy="96" r="2.4" stroke="#c9cdd3" stroke-width="0.9"/><path d="M1419,98 L1425,92 L1427,94 L1421,100Z" fill="#f6c64a"/><path d="M1412,111 L1410,111 L1410,125 L1412,125" stroke="#c9cdd3"/><rect x="1412" y="112" width="5" height="4" stroke="#5fd08a" stroke-width="0.9"/><circle cx="1414.5" cy="121" r="2.4" stroke="#5fd08a" stroke-width="0.9"/><path d="M1419,112 L1419,124 L1422,121 L1425,126 L1426.5,125 L1423.5,120 L1427,120 Z" fill="#e8eaee"/><rect x="1455" y="72" width="28" height="6" fill="#f3c041"/><path d="M1458,72 L1458,75 M1461,72 L1461,74 M1464,72 L1464,75 M1467,72 L1467,74 M1470,72 L1470,75 M1473,72 L1473,74 M1476,72 L1476,75 M1479,72 L1479,74" stroke="#a07a20" stroke-width="0.8"/><path d="M1507,62 L1507,75 L1510,72 L1513,77 L1515,76 L1512,71 L1516,71 Z" fill="#e8eaee"/><rect x="1514" y="68" width="9" height="8" fill="#6ab6ea"/><path d="M1516,70.5 L1521,70.5 M1516,73 L1521,73" stroke="#fff" stroke-width="0.8"/><path d="M1511,60 L1509,64 L1512,64 L1510,68" stroke="#f6c64a" stroke-width="1"/><rect x="1507.5" y="85.5" width="14" height="14" stroke="#5fd08a" stroke-width="1" stroke-dasharray="2,1"/><rect x="1510" y="88" width="9" height="9" fill="#4a9a7a"/><path d="M1514,90 L1514,102 L1517,99 L1520,104 L1522,103 L1519,98 L1523,98 Z" fill="#e8eaee"/><rect x="1508" y="109" width="14" height="17" rx="1" fill="#c9cdd3"/><rect x="1510" y="111" width="10" height="4" fill="#3c4352"/><path d="M1510,117.5 L1520,117.5 M1510,120.5 L1520,120.5 M1510,123.5 L1520,123.5 M1513.3,116 L1513.3,125 M1516.6,116 L1516.6,125" stroke="#3c4352" stroke-width="1"/><rect x="1544" y="64" width="21" height="27" fill="#d1a15a"/><rect x="1550" y="60" width="9" height="6" rx="1" fill="#e8eaee"/><path d="M1554,91 L1554,71 L1566,71 L1571,76 L1571,92 L1554,92 Z" fill="#e8eaee"/><path d="M1566,71 L1566,76 L1571,76" fill="#c9cdd3"/><rect x="1587" y="61" width="12" height="12" fill="#c9cdd3"/><path d="M1589,64 L1597,64 M1589,67 L1597,67" stroke="#3c4352"/><path d="M1594,66 L1601,74 M1601,66 L1594,74" stroke="#e8eaee" stroke-width="1.2"/><circle cx="1595" cy="75" r="2" stroke="#e8eaee" stroke-width="1.1" fill="#3c4352"/><circle cx="1601" cy="75" r="2" stroke="#e8eaee" stroke-width="1.1" fill="#3c4352"/><rect x="1588" y="85" width="9" height="12" fill="#c9cdd3"/><path d="M1591,89 L1598,89 L1601,92 L1601,101 L1591,101 Z" fill="#e8eaee" stroke="#3c4352" stroke-width="0.8"/><path d="M1636,64 L1647,64 L1647,74 L1668,74 L1668,88 L1636,88 Z" fill="#dadde2"/><path d="M1352,138 L1357,143 M1357,139 L1357,143 L1353,143" stroke="#c9cdd3" stroke-width="1"/><path d="M1671,138 L1676,143 M1676,139 L1676,143 L1672,143" stroke="#c9cdd3" stroke-width="1"/></svg>
<div class="a" style="left:16px;top:159px;width:16px;height:2px;background:#e6e8eb;"></div>
<div class="a" style="left:16px;top:164px;width:16px;height:2px;background:#e6e8eb;"></div>
<div class="a" style="left:16px;top:170px;width:16px;height:2px;background:#e6e8eb;"></div>
<svg class="a" style="left:42px;top:157px;" width="8" height="16" viewBox="0 0 8 16" fill="none"><path d="M6.5,0.5 L1.5,15.5" stroke="#4a505a" stroke-width="1.2"/></svg>
<svg class="a" style="left:91px;top:157px;" width="8" height="16" viewBox="0 0 8 16" fill="none"><path d="M6.5,0.5 L1.5,15.5" stroke="#4a505a" stroke-width="1.2"/></svg>
<div class="t" style="left:58px;top:159.8px;font-size:12px;line-height:14px;color:#e6e8eb;">Start</div>
<div class="t" style="left:106px;top:159.8px;font-size:12px;line-height:14px;color:#e6e8eb;">bahçe sandalyesi*</div>
<svg class="a" style="left:220px;top:151px;" width="145" height="27" viewBox="0 0 145 27" fill="none"><path d="M0,27 L9,0 L145,0 L136,27 Z" fill="#3c4352"/></svg>
<div class="t" style="left:236px;top:159.8px;font-size:12px;line-height:14px;color:#f2f4f6;font-weight:bold;transform:scaleX(0.96);transform-origin:0 0">bebek sandalyesi*</div>
<svg class="a" style="left:341px;top:160px;" width="11" height="11" viewBox="0 0 11 11" fill="none"><path d="M1.5,1.5 L9.5,9.5 M9.5,1.5 L1.5,9.5" stroke="#a0a6ae" stroke-width="1.6"/></svg>
<svg class="a" style="left:371px;top:158px;" width="16" height="16" viewBox="0 0 16 16" fill="none"><path d="M8,1 L8,15 M1,8 L15,8" stroke="#e6e8eb" stroke-width="2"/></svg>
<svg class="a" style="left:396px;top:157px;" width="8" height="16" viewBox="0 0 8 16" fill="none"><path d="M6.5,0.5 L1.5,15.5" stroke="#4a505a" stroke-width="1.2"/></svg>
<div class="a" style="left:0px;top:1007px;width:1920px;height:1px;background:#2a2f38;"></div>
<div class="a" style="left:0px;top:1008px;width:1920px;height:3px;background:#3a3f4a;"></div>
<div class="a" style="left:0px;top:1011px;width:1920px;height:29px;background:#222833;"></div>
<div class="a" style="left:16px;top:1016px;width:16px;height:2px;background:#e6e8eb;"></div>
<div class="a" style="left:16px;top:1021px;width:16px;height:2px;background:#e6e8eb;"></div>
<div class="a" style="left:16px;top:1027px;width:16px;height:2px;background:#e6e8eb;"></div>
<svg class="a" style="left:43px;top:1014px;" width="8" height="16" viewBox="0 0 8 16" fill="none"><path d="M6.5,0.5 L1.5,15.5" stroke="#4a505a" stroke-width="1.2"/></svg>
<div class="t" style="left:58.5px;top:1016.8px;font-size:12px;line-height:14px;color:#e6e8eb;">Model</div>
<svg class="a" style="left:99px;top:1011px;" width="78" height="24" viewBox="0 0 78 24" fill="none"><path d="M0,24 L9,0 L78,0 L69,24 Z" fill="#363d49"/></svg>
<div class="t" style="left:116.5px;top:1016.8px;font-size:12px;line-height:14px;color:#f2f4f6;font-weight:bold;">Layout2</div>
<svg class="a" style="left:185px;top:1016px;" width="16" height="16" viewBox="0 0 16 16" fill="none"><path d="M8,1 L8,15 M1,8 L15,8" stroke="#e6e8eb" stroke-width="2"/></svg>
<svg class="a" style="left:210px;top:1014px;" width="8" height="16" viewBox="0 0 8 16" fill="none"><path d="M6.5,0.5 L1.5,15.5" stroke="#4a505a" stroke-width="1.2"/></svg>
<div class="a" style="left:1431px;top:1013px;width:40px;height:23px;background:#3a4150;"></div>
<div class="a" style="left:1475px;top:1013px;width:103px;height:23px;background:#3a4150;"></div>
<div class="a" style="left:1579px;top:1013px;width:64px;height:23px;background:#3a4150;"></div>
<div class="a" style="left:1646px;top:1013px;width:72px;height:23px;background:#3a4150;"></div>
<div class="a" style="left:1721px;top:1013px;width:40px;height:23px;background:#3a4150;"></div>
<div class="a" style="left:1762px;top:1013px;width:24px;height:23px;background:#3a4150;"></div>
<div class="a" style="left:1789px;top:1013px;width:24px;height:23px;background:#3a4150;"></div>
<div class="a" style="left:1815px;top:1013px;width:48px;height:23px;background:#3a4150;"></div>
<div class="a" style="left:1868px;top:1013px;width:24px;height:23px;background:#3a4150;"></div>
<div class="a" style="left:1894px;top:1013px;width:24px;height:23px;background:#3a4150;"></div>
<div class="a" style="left:1475px;top:1013px;width:22px;height:23px;background:#4f7db3;"></div>
<div class="a" style="left:1580px;top:1013px;width:22px;height:23px;background:#4f7db3;"></div>
<div class="a" style="left:1604px;top:1013px;width:22px;height:23px;background:#4f7db3;"></div>
<div class="t" style="left:1434px;top:1017.8px;font-size:12px;line-height:14px;color:#e6e8eb;transform:scaleX(0.93);transform-origin:0 0">PAPER</div>
<svg class="a" style="left:0;top:1000px" width="1920" height="40" viewBox="0 1000 1920 40" fill="none"><path d="M1479.5,1017 L1479.5,1031.5 L1494,1031.5 M1479.5,1027 L1484,1027 L1484,1031.5" stroke="#e2e5e9" stroke-width="1.2"/><circle cx="1508" cy="1025" r="6.5" stroke="#e2e5e9" stroke-width="1.2"/><path d="M1508,1025 L1515,1017 M1508,1025 L1518,1025" stroke="#e2e5e9" stroke-width="1.2"/><path d="M1525,1022 L1533,1022 L1529,1027Z" fill="#e2e5e9"/><path d="M1542,1017 L1556,1031" stroke="#c0606a" stroke-width="1.2"/><path d="M1549,1016 L1549,1033" stroke="#60c0a8" stroke-width="1.2"/><circle cx="1549" cy="1024" r="1.5" fill="#e2e5e9"/><path d="M1565,1022 L1573,1022 L1569,1027Z" fill="#e2e5e9"/><path d="M1583,1031 L1598,1018 M1583,1031 L1598,1031" stroke="#e2e5e9" stroke-width="1.2"/><circle cx="1589.5" cy="1025" r="1.5" fill="#e2e5e9"/><rect x="1607.5" y="1019.5" width="15" height="12" stroke="#e2e5e9" stroke-width="1.2"/><rect x="1606" y="1017" width="4" height="4" stroke="#e2e5e9" stroke-width="1" fill="#4f7db3"/><path d="M1631,1022 L1639,1022 L1635,1027Z" fill="#e2e5e9"/><rect x="1650.5" y="1017.5" width="15" height="15" stroke="#e2e5e9" stroke-width="1.1" stroke-dasharray="2.5,1.5"/><rect x="1654.5" y="1021.5" width="7" height="7" stroke="#e2e5e9" stroke-width="1.1"/><path d="M1650,1017 L1655,1022" stroke="#e2e5e9" stroke-width="1.2"/><path d="M1674,1033 L1680,1017 L1686,1033 L1680,1028Z" fill="#c9cdd3"/><circle cx="1688" cy="1020.5" r="2.6" stroke="#e2e5e9" stroke-width="1"/><path d="M1698,1033 L1704,1017 L1710,1033 L1704,1028Z" fill="#c9cdd3"/><path d="M1712,1016 L1709,1021 L1712,1021 L1709,1026" stroke="#e2e5e9" stroke-width="1"/><circle cx="1732.5" cy="1024.5" r="5" fill="#c9cdd3"/><circle cx="1732.5" cy="1024.5" r="7" stroke="#c9cdd3" stroke-width="2.4" stroke-dasharray="2.2,2.2"/><circle cx="1732.5" cy="1024.5" r="2" fill="#3a4150"/><path d="M1749,1022 L1757,1022 L1753,1027Z" fill="#e2e5e9"/><path d="M1774,1017 L1774,1033 M1766,1025 L1782,1025" stroke="#e2e5e9" stroke-width="1.6"/><rect x="1793.5" y="1017.5" width="6" height="6" stroke="#e2e5e9" stroke-width="1"/><circle cx="1805.5" cy="1023.5" r="3" stroke="#e2e5e9" stroke-width="1"/><path d="M1799,1027 L1802,1032 L1796,1032Z" stroke="#e2e5e9" stroke-width="1"/><path d="M1823,1016 L1823,1026 M1820,1020 L1832,1020" stroke="#6ab6ea" stroke-width="1.3"/><circle cx="1823" cy="1020" r="2" fill="#6ab6ea"/><rect x="1819" y="1027" width="11" height="4" fill="#f3b33d"/><path d="M1830,1033 L1833.5,1026 L1837,1033Z" fill="#f3d03d"/><rect x="1842" y="1017" width="15" height="11" fill="#c9cdd3"/><path d="M1843,1024 L1847,1020 L1851,1025 L1855,1021" stroke="#666" stroke-width="1"/><path d="M1851,1033 L1855,1026 L1859,1033Z" fill="#f08a80"/><rect x="1872.5" y="1019.5" width="15" height="11" stroke="#e2e5e9" stroke-width="1.2"/><path d="M1875,1028 L1879,1024 M1885,1022 L1881,1026" stroke="#e2e5e9" stroke-width="1"/><path d="M1898,1018 L1914,1018 M1898,1024.5 L1914,1024.5 M1898,1031 L1914,1031" stroke="#e2e5e9" stroke-width="2"/></svg>
<div class="a" style="left:0px;top:1040px;width:1920px;height:40px;background:#202021;"></div>
<svg class="a" style="left:15px;top:1052px;" width="18" height="17" viewBox="0 0 18 17" fill="none"><path d="M0,2.5 L7.5,1.3 L7.5,7.8 L0,7.8 Z M8.5,1.1 L18,0 L18,7.8 L8.5,7.8 Z M0,8.8 L7.5,8.8 L7.5,15.3 L0,14.3 Z M8.5,8.8 L18,8.8 L18,17 L8.5,15.5 Z" fill="#fff"/></svg>
<div class="a" style="left:48px;top:1040px;width:288px;height:40px;background:#f1f1f1;"></div>
<svg class="a" style="left:58px;top:1050px;" width="20" height="20" viewBox="0 0 20 20" fill="none"><circle cx="11.5" cy="8" r="5.2" stroke="#222" stroke-width="1.4"/><path d="M8,11.8 L2,18" stroke="#222" stroke-width="1.5"/></svg>
<div class="t" style="left:88px;top:1051.8px;font-size:15px;line-height:18px;color:#222;">Ara</div>
<svg class="a" style="left:262px;top:1040px;" width="74" height="40" viewBox="0 0 74 40" fill="none"><path d="M10,40 Q14,28 24,26 L30,14 L27,4 L34,9 L38,6 L39,16 Q44,22 48,32 L52,40 Z" fill="#e8a83a"/><path d="M30,40 Q34,26 40,24 L44,14 L43,6 L50,11 L53,9 L52,18 Q60,24 66,40 Z" fill="#f0b445"/><path d="M46,22 Q58,4 70,12 Q60,14 58,26 Z" fill="#e89a30"/><path d="M0,40 L74,40 L74,36 Q50,34 30,37 Q10,35 0,38Z" fill="#7a8a3a"/><circle cx="33" cy="18" r="1" fill="#333"/><circle cx="47" cy="20" r="1" fill="#333"/></svg>
<svg class="a" style="left:350px;top:1047px;" width="26" height="26" viewBox="0 0 26 26" fill="none"><circle cx="13" cy="13" r="12" fill="#db4437"/><path d="M13,13 L2.6,19 A12,12 0 0 0 19,23.4 Z" fill="#0f9d58"/><path d="M13,13 L19,23.4 A12,12 0 0 0 25,13 L13,13Z" fill="#f4c20d"/><path d="M13,7 L23.4,7 A12,12 0 0 1 19,23.4 L13,13Z" fill="#f4c20d"/><path d="M13,13 L2.6,19 A12,12 0 0 1 2.6,7 Z" fill="#0f9d58"/><circle cx="13" cy="13" r="5.2" fill="#fff"/><circle cx="13" cy="13" r="4.2" fill="#4285f4"/></svg>
<svg class="a" style="left:399px;top:1047px;" width="26" height="26" viewBox="0 0 26 26" fill="none"><ellipse cx="13" cy="13" rx="11.5" ry="12" fill="#e0141e"/><ellipse cx="13" cy="13" rx="4.2" ry="8.2" fill="#1c1c1d"/></svg>
<div class="a" style="left:437px;top:1039px;width:43px;height:41px;background:#3b3b3b;"></div>
<svg class="a" style="left:449px;top:1047px;" width="23" height="25" viewBox="0 0 23 25" fill="none"><rect x="1" y="1" width="21" height="23" rx="1.5" fill="#d0163f"/><path d="M6.5,14 L10,3.5 L13,3.5 L16.5,14 L14.3,14 L13.6,11.8 L9.4,11.8 L8.7,14 Z M10,10 L13,10 L11.5,5.5Z" fill="#fff"/><rect x="4" y="17" width="15" height="5" fill="#a80f30"/><text x="11.5" y="21.5" font-size="5" font-family="Liberation Sans" font-weight="bold" fill="#fff" text-anchor="middle">CAD</text></svg>
<svg class="a" style="left:496px;top:1047px;" width="28" height="26" viewBox="0 0 28 26" fill="none"><ellipse cx="12" cy="15" rx="11" ry="8" fill="#e8eef4"/><circle cx="7" cy="13" r="2" fill="#3a8ad8"/><circle cx="12" cy="11" r="2" fill="#e04040"/><circle cx="8" cy="18" r="2" fill="#40b040"/><circle cx="11" cy="16" r="1.6" fill="#203040"/><path d="M14,24 L24,4 L26,5 L17,25Z" fill="#d89a40"/></svg>
<svg class="a" style="left:545px;top:1047px;" width="28" height="26" viewBox="0 0 28 26" fill="none"><path d="M4,22 L10,4 L26,4 L21,22 Z" fill="#9ad0c8"/><path d="M6,24 L12,6 L26,6 L21,24 Z" fill="#cce8e4"/><path d="M4,22 L21,22 L21,24 L6,24Z" fill="#5aa090"/></svg>
<div class="a" style="left:343px;top:1078px;width:40px;height:2px;background:#76b9ed;"></div>
<div class="a" style="left:392px;top:1078px;width:40px;height:2px;background:#76b9ed;"></div>
<div class="a" style="left:437px;top:1078px;width:43px;height:2px;background:#76b9ed;"></div>
<div class="a" style="left:490px;top:1078px;width:40px;height:2px;background:#76b9ed;"></div>
<div class="a" style="left:538px;top:1078px;width:40px;height:2px;background:#76b9ed;"></div>
<svg class="a" style="left:1758px;top:1056px;" width="14" height="8" viewBox="0 0 14 8" fill="none"><path d="M1,7 L7,1 L13,7" stroke="#e6e6e6" stroke-width="1.1"/></svg>
<svg class="a" style="left:1780px;top:1051px;" width="20" height="17" viewBox="0 0 20 17" fill="none"><path d="M1.5,5.5 L5,5.5 L10,1.5 L10,15.5 L5,11.5 L1.5,11.5 Z" stroke="#e6e6e6" stroke-width="1.1"/><path d="M12.5,5.5 Q14.5,8.5 12.5,11.5" stroke="#e6e6e6" stroke-width="1"/><path d="M14.5,3 Q18,8.5 14.5,14" stroke="#8a8a8a" stroke-width="1"/></svg>
<div class="t" style="left:1734px;width:200px;text-align:center;top:1043.8px;font-size:12px;line-height:14px;color:#ececec;">17:38</div>
<div class="t" style="left:1734px;width:200px;text-align:center;top:1061.8px;font-size:12px;line-height:14px;color:#ececec;">10.04.2026</div>
<svg class="a" style="left:1878px;top:1051px;" width="19" height="17" viewBox="0 0 19 17" fill="none"><path d="M1.5,1.5 L17.5,1.5 L17.5,13.5 L11.5,13.5 L9.5,15.8 L7.5,13.5 L1.5,13.5 Z" stroke="#e6e6e6" stroke-width="1.2"/></svg>
<div class="a" style="left:1915px;top:1040px;width:1px;height:40px;background:#5a5a5a;"></div>
<svg class="a" style="left:0;top:0" width="1920" height="1080" viewBox="0 0 1920 1080" fill="none" stroke="#111" stroke-width="1.3" stroke-linejoin="round">
<!-- ===== FRONT VIEW ===== -->
<path d="M366.5,335 L375.5,276 Q376.5,271.5 381.5,270.5 Q420,262.5 462,261.5 Q504,262.5 543.5,270.5 Q548.5,271.5 549.5,276 L559,335"/>
<path d="M366,381.5 L366,338 Q366,333.5 371,333.5 L553,333.5 Q558,333.5 558,338 L558,381.5 Z"/>
<path d="M368.5,381 L368.5,340 Q369,336.5 373,336.5 L551,336.5 Q555.5,336.5 555.5,340 L555.5,381"/>
<path d="M357.5,458 Q353,460 352.5,456 L352.5,338 Q353,335 357,334.5 Q362,334.5 364.5,338 L364.5,453.7"/>
<path d="M568.2,458 Q572.5,460 573,456 L573,338 Q572.5,335 568.5,334.5 Q563.5,334.5 561,338 L561,453.7"/>
<rect x="359.5" y="344.5" width="7" height="6.5"/><rect x="559" y="344.5" width="7" height="6.5"/>
<path d="M363,352 L363,370 M561.5,352 L561.5,372"/>
<rect x="368.5" y="449.5" width="187" height="4.2"/>
<rect x="357.5" y="453.7" width="210.7" height="9" rx="2"/>
<path d="M375.2,462.8 L353,548 M377,462.8 L355,547.5 M551,462.8 L573,548 M549.2,462.8 L571,547.5"/>
<path d="M353,546 C370,544 385,543 400,543.5 C425,544 440,547.5 457,547 C480,546.5 500,543.5 516,543.5 C535,543.5 555,544.5 573,546.5"/>
<path d="M353,550.5 C370,548.5 385,547.5 400,548 C425,548.5 440,552 457,551.5 C480,551 500,548 516,548 C535,548 555,549 573,551 M353,546 L353,550.5 M573,546.5 L573,551"/>
<path d="M370.2,549.5 L304.5,824.3 L327,824.3 L391.5,549"/>
<path d="M532.1,548.5 L597.5,824.3 L619.7,824.3 L553.5,549.5"/>
<path d="M345.2,747.2 L579.6,747.2 M342.2,760 L582.7,760 M339.1,773.2 L585.8,773.2"/>
<g stroke-width="1.65"><!-- front left wheel -->
<path d="M312,824.3 L312,827 M318,824.3 L318,827"/>
<path d="M302,827.1 L323,827.1 M302,856.1 L323,856.1"/>
<path d="M302,827.1 A6.8,14.5 0 0 0 302,856.1 M309,827.1 A6.8,14.5 0 0 0 309,856.1 M316.5,827.1 A6.8,14.5 0 0 0 316.5,856.1"/>
<ellipse cx="323" cy="841.6" rx="6.6" ry="14.5"/>
<path d="M304,849 L310,849"/>
<!-- front right wheel -->
<path d="M607,824.3 L607,827 M612,824.3 L612,827"/>
<path d="M595.5,827.3 L619,827.3 M595.5,856.1 L619,856.1"/>
<path d="M595.5,827.3 A14.5,14.5 0 0 0 595.5,856.1"/>
<path d="M596,827.3 A3,14.4 0 0 0 596,856.1 M603,827.3 A2,14.4 0 0 0 603,856.1 M611,827.3 A2,14.4 0 0 0 611,856.1 M618.5,827.3 A2.5,14.4 0 0 0 618.5,856.1"/>
<path d="M619,827.3 A4.5,14.4 0 0 1 619,856.1"/>
<path d="M603,848 L610,848 M604,854 L610,849"/>

</g>
<!-- ===== SIDE VIEW ===== -->
<path d="M1128.6,261.5 L1141.5,263.8 L1123,347.6 M1111.4,346 L1128.6,261.5"/>
<rect x="808.7" y="335" width="15" height="46.5"/>
<path d="M823,334.6 L989.5,334.6 L1118,348.5 Q1125.5,350 1124,357 L1101,451 Q1098.5,458.5 1090,459 L913.4,459.5 L913.4,451 Q908,415 885,395 Q860,375 827,373.4 A19.4,19.4 0 0 1 823,334.6 Z" stroke-width="3.2" fill="#fff"/>
<path d="M823,334.6 L989.5,334.6 L1118,348.5 Q1125.5,350 1124,357 L1101,451 Q1098.5,458.5 1090,459 L913.4,459.5 L913.4,451 Q908,415 885,395 Q860,375 827,373.4 A19.4,19.4 0 0 1 823,334.6 Z" stroke="#fff" stroke-width="0.9"/>
<rect x="886.3" y="453.5" width="26.7" height="8.5" rx="1.5"/>
<rect x="903.2" y="449.5" width="9" height="4"/>
<path d="M913,462 L1090.3,462"/>
<path d="M887.9,462.3 L865.6,545.6 Q866,551 872,551 L878.4,551 M901.2,462.7 L878.7,545.6"/>
<path d="M1058.5,462.7 L1080.9,545.6 M1072,462.7 L1094.4,545.6 Q1094,551 1088,551 L1081,551"/>
<path d="M878.7,545 L1080.9,545 M878.7,548.3 L1080.9,548.3"/>
<path d="M879.8,549 L806.9,824.3 L829.6,824.3 L902.1,549"/>
<path d="M1057.9,549 L1130.5,824.3 L1153.2,824.3 L1080.2,549"/>
<path d="M850.3,747.2 L1110,747.2 M845.7,760 L1114.6,760 M842.6,773.2 L1116,773.2"/>
<!-- side left wheel -->
<circle cx="805.6" cy="841.8" r="14.4" stroke-width="1.6"/>
<path d="M812,827.4 A14.4,14.4 0 0 1 812,856.2"/>
<path d="M822.5,827.2 L822.5,838.9 M815,824.3 L815,827 M820,824.3 L820,827 M806,827.2 L822.5,827.2" stroke-width="1.6"/>
<g stroke-width="1.65"><!-- side right wheel -->
<path d="M1139,824.3 L1139,827 M1144.5,824.3 L1144.5,827"/>
<path d="M1127.7,827.2 L1156,827.2 M1127.7,856.1 L1156,856.1"/>
<path d="M1127.7,827.2 A14.5,14.5 0 0 0 1127.7,856.1"/>
<path d="M1134,827.2 A5.5,14.4 0 0 0 1134,856.1 M1141,827.2 A5.5,14.4 0 0 0 1141,856.1 M1149,827.2 A5.5,14.4 0 0 0 1149,856.1"/>
<ellipse cx="1156.1" cy="841.6" rx="7" ry="14.5"/>
<path d="M1137,841 L1141,841 M1138,848 L1142,848"/>

</g>
<!-- ===== TOP VIEW ===== -->
<!-- rails -->
<path d="M1351.5,808 L1351.5,492 Q1351.5,488.6 1357,488.6 Q1362.5,488.6 1362.5,492 L1362.5,808 Q1362.5,810.4 1357,810.4 Q1351.5,810.4 1351.5,808 Z"/>
<path d="M1560.4,808 L1560.4,492 Q1560.4,488.6 1566,488.6 Q1572.6,488.6 1572.6,492 L1572.6,808 Q1572.6,810.4 1566,810.4 Q1560.4,810.4 1560.4,808 Z"/>
<!-- backrest -->
<path d="M1362.5,494 L1374.4,476.4 L1400,474.5 L1461,473.5 L1522,474.5 L1548.5,476.4 L1560.4,494"/>
<path d="M1362.5,506.7 L1374.4,488.6 L1400,486.8 L1461,486 L1522,486.8 L1548.5,488.6 L1560.4,506.7"/>
<path d="M1362.5,529.1 L1560.4,529.1"/>
<path d="M1377.6,529.1 L1362.5,543 M1375.5,529.1 L1362.5,540 M1362.5,534 L1368,538 M1545.3,529.1 L1560.4,543 M1547.4,529.1 L1560.4,540"/>
<path d="M1367,617 L1367,548 Q1367,542.5 1373,542.5 L1550,542.5 Q1556,542.5 1556,548 L1556,617"/>
<rect x="1365" y="616" width="192" height="13" rx="6"/>
<rect x="1365" y="792" width="192" height="14.7" rx="7"/>
<path d="M1363,586 L1363,602 M1559,752 L1559,790"/>
<!-- legs -->
<path d="M1351.5,498.2 L1320.8,465.6 Q1313,459 1305.2,466.7 Q1301.5,471 1303.6,475 Q1304.5,479.5 1308,482.2 L1351.5,531.6"/>
<path d="M1305.2,466.7 Q1296,476 1294.4,491.4 L1314.7,502 L1320.8,496.1 M1303.6,473.5 L1295.5,490 M1308,482.5 L1301.3,495 M1313.6,488.6 L1308.3,498.3 M1319.1,494.4 L1315.2,501.1" stroke-width="1.5"/>
<path d="M1572.6,497.2 L1600,465.6 Q1607.8,460 1612,462.5 Q1617.5,466 1618.3,474.4 Q1618,478 1615.6,480.6 L1572.6,530"/>
<path d="M1591.7,451.7 Q1608,454 1615.6,465 Q1619,470 1618.3,474.4 M1591.7,451.7 L1580.3,471.7 L1587.2,479.4 L1590,477.2 M1592,452.5 L1614.5,464.5 M1588.3,458 L1600.6,465.6 M1584.2,464.7 L1595.3,471.7 M1580.5,471.7 L1590.5,477.5" stroke-width="1.5"/>
<path d="M1351.5,741.9 L1305.5,789.7 Q1301.5,795 1303,800 Q1306,807 1313.9,808.4 Q1321,807 1326,799.9 L1351.3,772.2"/>
<path d="M1305.5,789.7 Q1296,795 1295.2,802.3 L1294.6,816.2 L1315.7,824.6 Q1325,815 1326.6,802.3 L1326,799.9 M1302.5,797.5 L1295.2,815.6 M1306.7,806 L1302.2,818.6 M1314.5,808.4 L1309.4,821.6 M1323.5,803.5 L1316.9,824" stroke-width="1.5"/>
<path d="M1572.6,773.5 L1601.1,806 Q1605,809 1609,808.4 Q1617,806 1618.5,799 Q1619,796 1618,795.1 L1592.1,765 L1572.6,742"/>
<path d="M1593.9,798.1 Q1591,803 1591.5,810.2 Q1591.5,816 1593.3,820.4 L1616.2,823.4 Q1621,815 1622.2,804.8 Q1622,798 1619.8,794.5 M1596.3,801.7 L1593.6,819.8 M1603,807 L1601.1,821.3 M1610.8,808.4 L1609.3,822.2 M1619.2,795.7 L1616.5,822.8" stroke-width="1.5"/>
</svg>

<div class="t" style="left:293px;top:895.5px;font-size:26px;line-height:31px;color:#111;transform:scaleX(1.128);transform-origin:0 0">Front view</div>
<div class="t" style="left:795.5px;top:895.5px;font-size:26px;line-height:31px;color:#111;transform:scaleX(1.123);transform-origin:0 0">Side view</div>
<div class="t" style="left:1316px;top:861.5px;font-size:26px;line-height:31px;color:#111;transform:scaleX(1.15);transform-origin:0 0">Top view</div>
<div class="a" style="left:29px;top:996px;width:1px;height:11px;background:#333;"></div>
<div class="a" style="left:29px;top:181px;width:1px;height:2px;background:#222;"></div>
<svg class="a" style="left:80px;top:758px;" width="100" height="126" viewBox="0 0 100 126" fill="none"><defs>
<linearGradient id="dwgb" x1="0" y1="0" x2="1" y2="1"><stop offset="0" stop-color="#23508e"/><stop offset="1" stop-color="#143466"/></linearGradient>
<linearGradient id="dwgy" x1="0" y1="0" x2="1" y2="1"><stop offset="0" stop-color="#f7e46a"/><stop offset="1" stop-color="#e8c21c"/></linearGradient>
<linearGradient id="dwgc" x1="0" y1="0" x2="1" y2="1"><stop offset="0" stop-color="#3f78bd"/><stop offset="1" stop-color="#7aa6d8"/></linearGradient>
</defs>
<path d="M4.8,4.8 L59,4.8 Q66,5 72,12 L89,30 Q93.9,34 93.9,40 L93.9,121 L4.8,121 Z" fill="url(#dwgy)"/>
<path d="M4.8,4.8 L59,4.8 Q66,5 72,12 L89,30 Q93.9,34 93.9,40 L93.9,86 L30,67.5 L4.8,66.8 Z" fill="url(#dwgb)"/>
<path d="M66,8 Q70,16 71,28 Q80,30 92,36 Q88,28 80,20 Q72,11 66,8 Z" fill="url(#dwgc)"/>
<path d="M30.7,4.8 L30.7,66.8 M4.8,42.7 L93.9,42.7" stroke="#fff" stroke-width="2.6"/>
<rect x="21" y="33" width="19.5" height="19.5" fill="#1d4680" stroke="#fff" stroke-width="2.6"/>
<rect x="29.7" y="41.7" width="2" height="2" fill="#fff"/>
<text x="27.5" y="114" font-family="Liberation Sans" font-weight="bold" font-size="27" fill="#111" stroke="#111" stroke-width="0.8">.dwg</text></svg>
<svg class="a" style="left:8px;top:897px;" width="236" height="88" viewBox="0 0 236 88" fill="none"><defs>
<linearGradient id="dlr" x1="0" y1="0" x2="0" y2="1"><stop offset="0" stop-color="#f0323a"/><stop offset="0.55" stop-color="#e31c26"/><stop offset="1" stop-color="#c8141c"/></linearGradient>
<radialGradient id="dlc" cx="0.4" cy="0.35" r="0.7"><stop offset="0" stop-color="#d81820"/><stop offset="1" stop-color="#8e0a10"/></radialGradient>
</defs>
<rect x="1.6" y="1.9" width="232.4" height="84.2" rx="42" fill="url(#dlr)"/>
<path d="M20,12 Q40,4 80,4 L190,4 Q215,6 225,20" stroke="#f86068" stroke-width="1.5" opacity="0.6"/>
<circle cx="191.8" cy="44" r="25.5" fill="url(#dlc)" stroke="#b0101a" stroke-width="1.5"/>
<path d="M184.6,27 L199,27 L199,47.6 L206.3,47.6 L191.8,63 L177.4,47.6 L184.6,47.6 Z" fill="#fff"/>
<text x="21.6" y="56.8" font-family="Liberation Sans" font-weight="bold" font-size="29.5" fill="#fff" stroke="#fff" stroke-width="0.9" transform="translate(21.6,0) scale(0.77,1) translate(-21.6,0)">DOWNLOAD</text></svg>
<svg class="a" style="left:1670px;top:180px" width="220" height="220" viewBox="0 0 1080 1080">
<defs>
<linearGradient id="hairg" x1="0" y1="0" x2="0" y2="1"><stop offset="0" stop-color="#f9d640"/><stop offset="1" stop-color="#eea21c"/></linearGradient>
<linearGradient id="blobg" x1="0" y1="0" x2="1" y2="1"><stop offset="0" stop-color="#f8c62a"/><stop offset="1" stop-color="#eea418"/></linearGradient>
</defs>
<g stroke="#2a2a2a" stroke-width="8" stroke-linejoin="round" stroke-linecap="round">
<!-- legs & feet -->
<path d="M390,810 L300,900 L290,940 L350,950 L420,880 L500,840 Z" fill="#2f8fe0"/>
<path d="M500,830 L580,900 L590,950 L650,930 L640,880 L590,810 Z" fill="#2f8fe0"/>
<path d="M225,1000 Q240,955 300,935 L350,945 L340,985 Q280,1010 225,1000Z" fill="#2f8fe0"/>
<path d="M600,960 L650,950 Q690,990 690,1040 Q640,1035 610,1000Z" fill="#2f8fe0"/>
<path d="M285,905 L350,915 L345,955 L283,945Z" fill="#3e3e3e"/>
<path d="M580,925 L645,915 L655,955 L595,965Z" fill="#3e3e3e"/>
<!-- torso -->
<path d="M400,545 L610,555 L600,830 L380,805 Z" fill="#2f8fe0"/>
<path d="M380,785 L600,810 L598,835 L378,810Z" fill="#6a6a6a"/>
<path d="M490,580 L520,585 L515,825 L470,820Z" fill="#777"/>
<!-- left arm -->
<path d="M410,550 Q320,600 270,650 L300,715 Q360,680 420,640 Z" fill="#2f8fe0"/>
<!-- right arm -->
<path d="M600,555 L740,540 L755,570 L720,660 Q660,660 610,620 Z" fill="#2f8fe0"/>
<path d="M630,560 L680,555 L670,585Z" fill="#fff"/>
<!-- stick -->
<path d="M55,755 L900,425" stroke="#5a3410" stroke-width="34"/>
<path d="M55,755 L900,425" stroke="#b06a30" stroke-width="20"/>
<!-- paint blob -->
<path d="M855,280 Q900,280 930,320 Q1010,320 1020,390 Q1020,440 985,470 Q1000,520 995,560 Q960,575 945,520 Q930,470 890,440 Q860,380 855,280Z" fill="url(#blobg)"/>
<!-- hands -->
<path d="M210,690 Q220,650 260,650 Q300,660 300,700 Q290,730 240,725 Q205,715 210,690Z" fill="#f5c08e"/>
<path d="M680,500 Q700,470 740,475 Q765,500 750,535 Q720,550 690,530Z" fill="#f5c08e"/>
<!-- head -->
<path d="M300,300 L705,305 Q740,330 730,380 Q720,410 700,410 Q680,520 520,540 Q340,530 305,420 Q290,360 300,300Z" fill="#f5c08e"/>
<path d="M665,320 L700,315 L700,390 L668,385Z" fill="#f0a828" stroke="none"/>
<path d="M320,240 L328,135 L365,158 L398,72 L442,102 L548,26 L585,80 L642,64 L656,122 L702,168 L704,240 Z" fill="url(#hairg)"/><path d="M375,230 Q390,175 415,135 M460,230 Q470,165 515,110 M555,230 Q570,165 610,125 M640,230 Q650,185 680,165" stroke="#e59216" stroke-width="10" fill="none"/>
<path d="M290,240 Q500,205 705,235 L705,315 Q500,335 295,300 Z" fill="#3e3e3e"/>
<path d="M700,245 Q790,215 850,285 Q800,270 780,280 Q810,320 790,375 Q760,320 700,300Z" fill="#3e3e3e"/>
<ellipse cx="405" cy="345" rx="55" ry="32" fill="#fff"/>
<ellipse cx="565" cy="345" rx="55" ry="32" fill="#fff"/>
<circle cx="412" cy="345" r="22" fill="#3a8ad8" stroke="none"/>
<circle cx="558" cy="345" r="22" fill="#3a8ad8" stroke="none"/>
<path d="M450,405 Q470,430 485,415" fill="none" stroke-width="6"/>
<path d="M410,450 Q480,485 560,445" fill="none" stroke-width="7"/>
</g>
</svg>
<svg class="a" style="left:1620px;top:370px" width="300" height="90" viewBox="0 0 1920 576">
<defs><linearGradient id="txg" gradientUnits="userSpaceOnUse" x1="0" y1="80" x2="0" y2="480"><stop offset="0" stop-color="#2ea0e8"/><stop offset="1" stop-color="#1a6cc8"/></linearGradient></defs>
<g stroke="url(#txg)" stroke-width="42" stroke-linecap="round" stroke-linejoin="round" fill="none">
<path d="M92.8,92.8 L92.8,330"/>
<path d="M83,83 Q230,80 265,130 Q290,175 293,228 Q220,250 125,246"/>
<path d="M313.6,331 L316.8,396" stroke-width="44"/>
<path d="M425,284 Q360,270 372,310 Q390,335 450,360 Q505,395 488,432 Q440,450 382,400"/>
<path d="M550,228 L573,457"/>
<circle cx="625" cy="298" r="10" fill="#555" stroke="none"/>
<path d="M648,401 L657,471" stroke-width="44"/>
<path d="M709,280 L728,476"/>
<path d="M793,387 L742,415 L881,466"/>
<path d="M952,437 L919,261 L1012,365 L1095,239 L1172,476"/>
<path d="M1238,404 L1260,459" stroke-width="44"/>
<path d="M1282,382 L1326,437 L1392,344 L1458,393 Q1500,340 1540,320"/>
<path d="M1595,261 Q1661,240 1744,288 Q1720,350 1606,360 Q1570,310 1595,261 M1744,288 L1766,344"/>
<path d="M1772,327 L1755,234 Q1800,190 1875,179"/>
</g>
</svg>
</body></html>
